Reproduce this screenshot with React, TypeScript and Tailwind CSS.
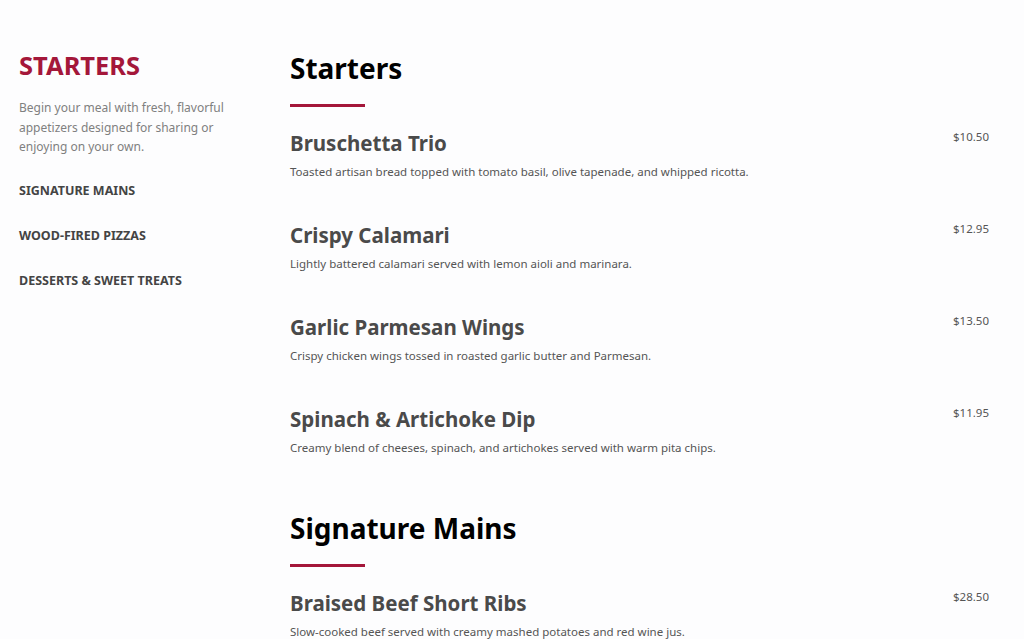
const navItems = ["Signature Mains", "Wood-Fired Pizzas", "Desserts & Sweet Treats"];

type MenuItem = { name: string; desc: string; price: string };

const sections: { title: string; items: MenuItem[] }[] = [
  {
    title: "Starters",
    items: [
      { name: "Bruschetta Trio", desc: "Toasted artisan bread topped with tomato basil, olive tapenade, and whipped ricotta.", price: "$10.50" },
      { name: "Crispy Calamari", desc: "Lightly battered calamari served with lemon aioli and marinara.", price: "$12.95" },
      { name: "Garlic Parmesan Wings", desc: "Crispy chicken wings tossed in roasted garlic butter and Parmesan.", price: "$13.50" },
      { name: "Spinach & Artichoke Dip", desc: "Creamy blend of cheeses, spinach, and artichokes served with warm pita chips.", price: "$11.95" },
    ],
  },
  {
    title: "Signature Mains",
    items: [
      { name: "Braised Beef Short Ribs", desc: "Slow-cooked beef served with creamy mashed potatoes and red wine jus.", price: "$28.50" },
      { name: "Herb-Crusted Salmon", desc: "Atlantic salmon with a lemon herb crust, wild rice, and seasonal vegetables.", price: "$26.95" },
    ],
  },
];

export default function App() {
  return (
    <div className="min-h-screen bg-[#fdfdfe] font-['Noto_Sans',sans-serif] pl-[19px] pr-[35px] pt-[48px] flex">
      {/* Sidebar */}
      <aside className="w-[271px] shrink-0 pr-[40px]">
        <h2 className="text-[25.5px] leading-[34px] font-bold text-[#a4173a]">STARTERS</h2>
        <p className="mt-[16px] text-[12px] leading-[19.5px] text-[#808080]">
          Begin your meal with fresh, flavorful appetizers designed for sharing or enjoying on your own.
        </p>
        <nav className="mt-[25px] flex flex-col gap-[27px]">
          {navItems.map((n) => (
            <a key={n} className="text-[12.5px] leading-[18px] font-bold uppercase text-[#444]">{n}</a>
          ))}
        </nav>
      </aside>

      {/* Main */}
      <main className="flex-1 flex flex-col gap-[51px]">
        {sections.map((s) => (
          <section key={s.title}>
            <h1 className="text-[28px] leading-[40px] font-bold text-black">{s.title}</h1>
            <div className="mt-[16px] w-[75px] h-[3px] bg-[#a4173a]" />
            <div className="mt-[21px] flex flex-col gap-[39px]">
              {s.items.map((item) => (
                <div key={item.name} className="flex justify-between items-start">
                  <div>
                    <h3 className="text-[20.5px] leading-[30px] font-bold text-[#4a4a4a]">{item.name}</h3>
                    <p className="mt-[5px] text-[11.5px] leading-[18px] text-[#555]">{item.desc}</p>
                  </div>
                  <span className="text-[11.5px] leading-[18px] text-[#555]">{item.price}</span>
                </div>
              ))}
            </div>
          </section>
        ))}
      </main>
    </div>
  );
}
